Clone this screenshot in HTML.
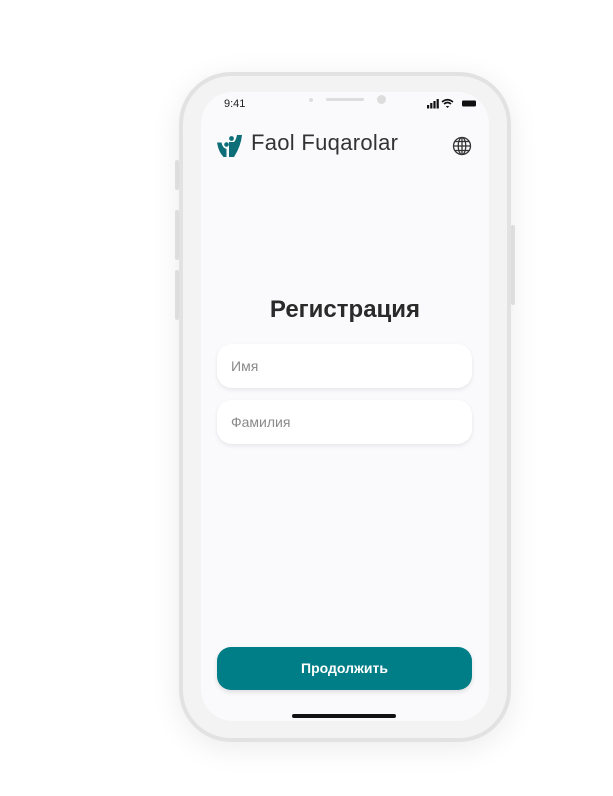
<!DOCTYPE html>
<html><head><meta charset="utf-8"><style>
body{margin:0;width:613px;height:796px;background:#fff;position:relative;overflow:hidden;font-family:"Liberation Sans",sans-serif}
.frame{position:absolute;left:179px;top:72px;width:332px;height:670px;border-radius:52px;background:#f3f3f4;border:4px solid #e2e2e3;box-sizing:border-box;box-shadow:0 6px 30px rgba(0,0,0,0.08)}
.btn-side{position:absolute;background:#e6e6e7;width:4px;border-radius:2px}
.screen{position:absolute;left:201px;top:92px;width:288px;height:629px;border-radius:32px;background:#fafafc}
.abs{position:absolute}
.input{position:absolute;left:217px;width:255px;height:44px;background:#fff;border-radius:15px;box-shadow:0 2px 5px rgba(0,0,0,0.08);font-size:14px;color:#8a8a8a;line-height:44px;padding-left:14px;box-sizing:border-box}
</style></head><body>
<div class="btn-side" style="left:175px;top:160px;height:30px"></div>
<div class="btn-side" style="left:175px;top:210px;height:50px"></div>
<div class="btn-side" style="left:175px;top:270px;height:50px"></div>
<div class="btn-side" style="left:511px;top:225px;height:80px"></div>
<div class="frame"></div>
<div class="screen"></div>
<div class="abs" style="left:224px;top:98px;font-size:11px;color:#222">9:41</div>
<div class="abs" style="left:309px;top:98px;width:4px;height:4px;border-radius:50%;background:#ddd"></div>
<div class="abs" style="left:326px;top:98px;width:38px;height:3px;border-radius:2px;background:#ddd"></div>
<div class="abs" style="left:377px;top:95px;width:9px;height:9px;border-radius:50%;background:#ddd"></div>
<svg class="abs" style="left:427px;top:98px" width="52" height="11" viewBox="0 0 52 11">
<rect x="0" y="7" width="2.2" height="3.5" fill="#111"/><rect x="3.2" y="5" width="2.2" height="5.5" fill="#111"/><rect x="6.4" y="3" width="2.2" height="7.5" fill="#111"/><rect x="9.6" y="1" width="2.2" height="9.5" fill="#111"/>
<path d="M15 4 Q20.5 -0.5 26 4 M17 6 Q20.5 3 24 6" stroke="#111" stroke-width="1.6" fill="none"/><path d="M18.7 8 L20.5 10 L22.3 8 Z" fill="#111"/>
<rect x="35" y="2.5" width="14" height="6" rx="1.2" fill="#111"/></svg>
<svg class="abs" style="left:214px;top:132px" width="30" height="26" viewBox="0 0 30 26">
<circle cx="12.5" cy="12.5" r="2.3" fill="#0e6e78"/>
<circle cx="17.5" cy="6.5" r="2.4" fill="#0e6e78"/>
<path d="M3 10.5 L7.5 10.5 Q8.5 16 12.5 17 L12.5 25 L9.5 25 Q4.5 20 3 10.5 Z" fill="#0e6e78"/>
<path d="M15 10 L20 10 Q22 8 23 3 L28 3 Q27 14 20 25 L15 25 Z" fill="#0e6e78"/>
</svg>
<div class="abs" style="left:251px;top:130px;font-size:22px;color:#333;letter-spacing:0.3px">Faol Fuqarolar</div>
<svg class="abs" style="left:452px;top:136px" width="20" height="20" viewBox="0 0 20 20" fill="none" stroke="#333" stroke-width="1.3">
<circle cx="10" cy="10" r="8.5"/><ellipse cx="10" cy="10" rx="3.8" ry="8.5"/><path d="M1.5 10H18.5M3 5.5H17M3 14.5H17M10 1.5V18.5"/></svg>
<div class="abs" style="left:201px;width:288px;top:296px;text-align:center;font-size:24px;font-weight:bold;color:#2a2a2a">Регистрация</div>
<div class="input" style="top:344px">Имя</div>
<div class="input" style="top:400px">Фамилия</div>
<div class="abs" style="left:217px;top:647px;width:255px;height:43px;border-radius:14px;background:#007e87;color:#fff;font-weight:bold;font-size:14px;text-align:center;line-height:43px;box-shadow:0 2px 5px rgba(0,0,0,0.12)">Продолжить</div>
<div class="abs" style="left:292px;top:714px;width:104px;height:4px;border-radius:2px;background:#111"></div>
</body></html>
